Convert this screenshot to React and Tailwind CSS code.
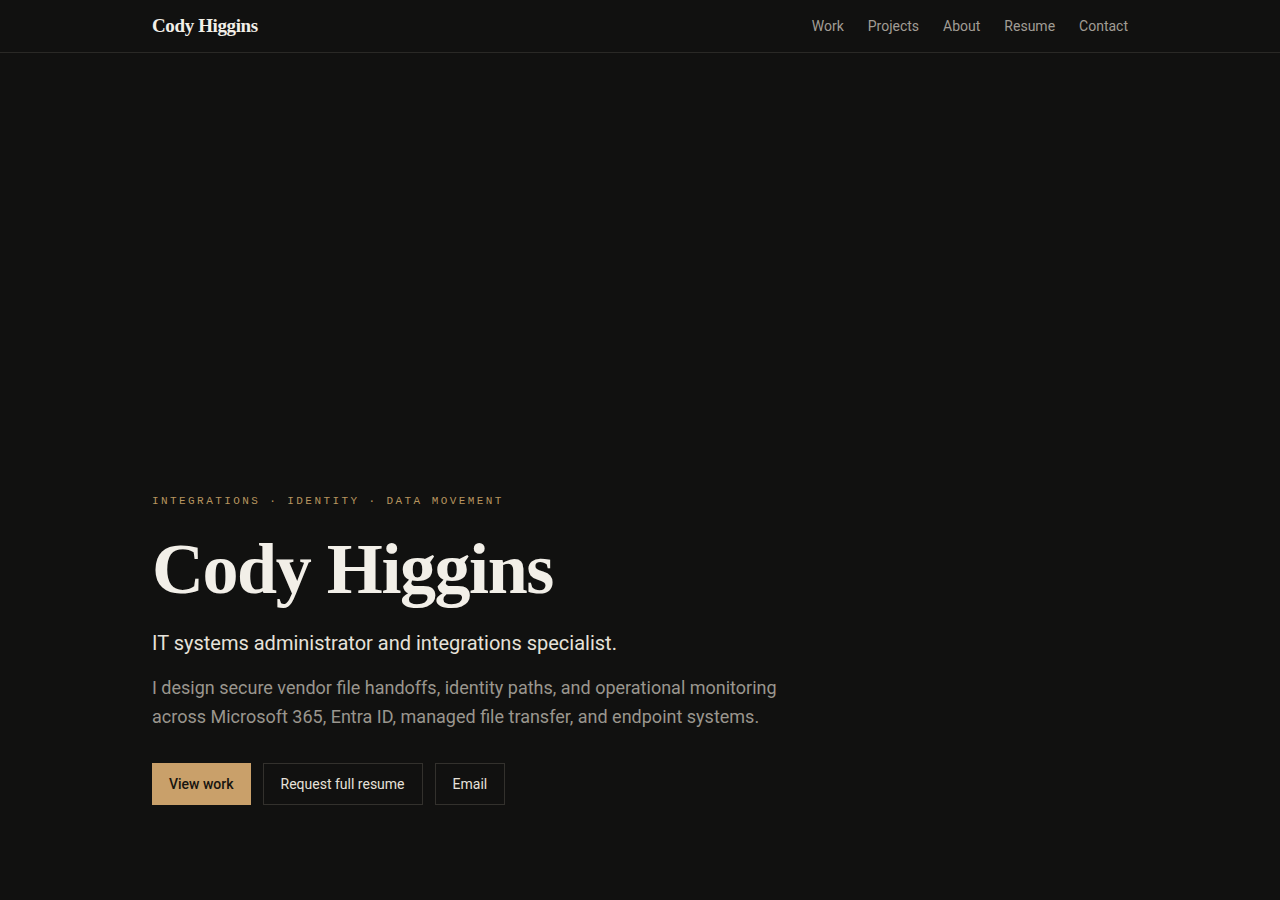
const serif = { fontFamily: '"Liberation Serif", "DejaVu Serif", serif' }

const navLinks = ['Work', 'Projects', 'About', 'Resume', 'Contact']

function Header() {
  return (
    <header className="border-b border-[#2a2926] bg-[#111110]">
      <div className="mx-auto flex h-[52px] max-w-[1024px] items-center justify-between px-6">
        <a href="#" className="text-[19px] font-bold tracking-[-0.02em] text-[#f2efe8]" style={serif}>
          Cody Higgins
        </a>
        <nav className="flex items-center gap-6 text-[14px] text-[#a19d95]">
          {navLinks.map((l) => (
            <a key={l} href="#" className="hover:text-[#f2efe8]">
              {l}
            </a>
          ))}
        </nav>
      </div>
    </header>
  )
}

function Hero() {
  return (
    <section className="mx-auto flex min-h-[847px] max-w-[1024px] flex-col justify-end px-6 pb-[95px]">
      <p className="font-['Liberation_Mono',monospace] text-[11px] uppercase tracking-[0.22em] text-[#b8955f]">
        Integrations · Identity · Data Movement
      </p>
      <h1
        className="mt-[24px] text-[72px] font-bold leading-[1] tracking-[-0.02em] text-[#f2efe8]"
        style={serif}
      >
        Cody Higgins
      </h1>
      <p className="mt-[24px] text-[20px] leading-[1.4] text-[#e6e2da]">
        IT systems administrator and integrations specialist.
      </p>
      <p className="mt-[16px] max-w-[680px] text-[18px] leading-[29px] text-[#9a968e]">
        I design secure vendor file handoffs, identity paths, and operational monitoring
        across Microsoft 365, Entra ID, managed file transfer, and endpoint systems.
      </p>
      <div className="mt-[32px] flex gap-3 text-[14px]">
        <a href="#" className="flex h-[42px] items-center bg-[#c9a06a] px-[17px] font-medium text-[#17140f]">
          View work
        </a>
        <a href="#" className="flex h-[42px] items-center border border-[#33312d] px-[17px] text-[#e6e2da]">
          Request full resume
        </a>
        <a href="#" className="flex h-[42px] items-center border border-[#33312d] px-[17px] text-[#e6e2da]">
          Email
        </a>
      </div>
    </section>
  )
}

export default function App() {
  return (
    <div className="min-h-screen bg-[#111110] font-['Roboto',sans-serif]">
      <Header />
      <Hero />
    </div>
  )
}
